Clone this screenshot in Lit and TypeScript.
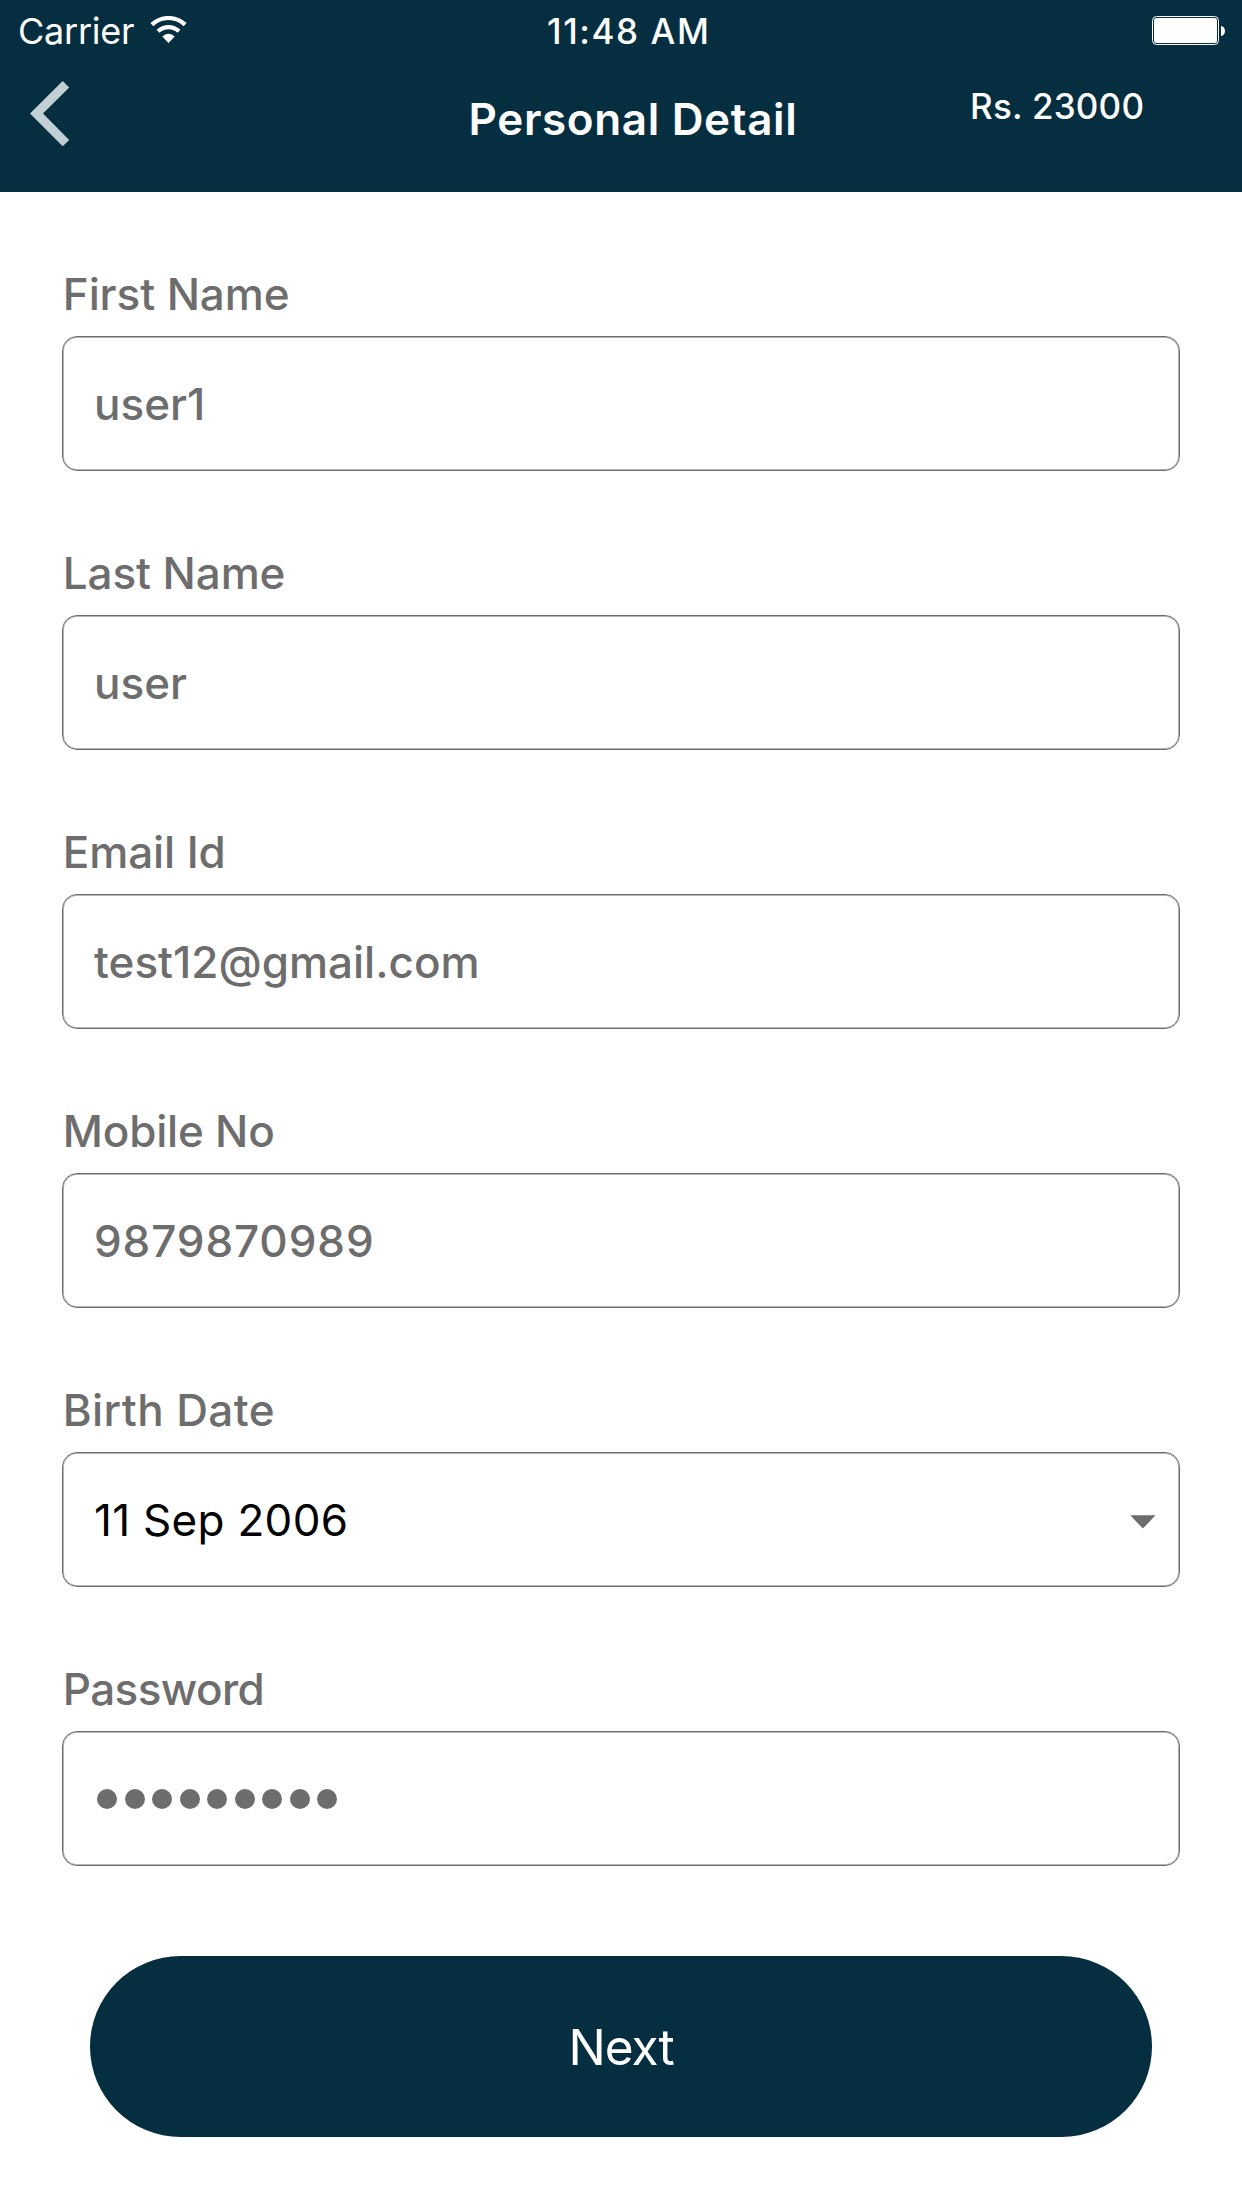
import { LitElement, html, css, svg, nothing } from "lit";
import { customElement, property } from "lit/decorators.js";

type FieldKind = "text" | "date" | "password";

interface Field {
  label: string;
  value: string;
  kind: FieldKind;
  name: string;
}

const FIELDS: Field[] = [
  { name: "first", label: "First Name", value: "user1", kind: "text" },
  { name: "last", label: "Last Name", value: "user", kind: "text" },
  { name: "email", label: "Email Id", value: "test12@gmail.com", kind: "text" },
  { name: "mobile", label: "Mobile No", value: "9879870989", kind: "text" },
  { name: "birth", label: "Birth Date", value: "11 Sep 2006", kind: "date" },
  { name: "password", label: "Password", value: "", kind: "password" },
];

const PASSWORD_LENGTH = 9;

@customElement("status-bar")
export class StatusBar extends LitElement {
  static styles = css`
    :host {
      display: grid;
      grid-template-columns: 547px 1fr auto;
      align-items: center;
      height: 62px;
      padding: 0 17px 0 0;
      box-sizing: border-box;
      color: #fff;
      font-size: 36px;
      line-height: 62px;
      white-space: nowrap;
    }
    .network {
      display: flex;
      align-items: center;
      gap: 15px;
      padding-left: 18px;
    }
    .carrier {
      width: 117px;
      letter-spacing: -0.25px;
    }
    .wifi {
      display: block;
      margin-top: -3px;
    }
    .time {
      font-size: 35px;
      font-weight: 500;
      letter-spacing: 1.6px;
    }
    .battery {
      display: block;
      margin-top: -1px;
    }
  `;

  render() {
    return html`
      <div class="network">
        <span class="carrier">Carrier</span>
        <svg class="wifi" width="37" height="27" viewBox="0 0 37 27">
          ${svg`
            <path d="M1.9 8.6A24.2 24.2 0 0 1 35.1 8.6" fill="none" stroke="#fff" stroke-width="4.2"/>
            <path d="M8 15.2A15.4 15.4 0 0 1 29 15.2" fill="none" stroke="#fff" stroke-width="4.2"/>
            <path d="M12.3 20.4A8.8 8.8 0 0 1 24.7 20.4L18.5 27Z" fill="#fff"/>
          `}
        </svg>
      </div>
      <span class="time">11:48 AM</span>
      <svg class="battery" width="73" height="29" viewBox="0 0 73 29">
        ${svg`
          <rect x="0.5" y="0.5" width="66" height="28" rx="4" fill="none" stroke="#fff"/>
          <rect x="2" y="2" width="63" height="25" rx="2.5" fill="#fff"/>
          <path d="M69 10C74.3 10.6 74.3 19.4 69 20Z" fill="#fff"/>
        `}
      </svg>
    `;
  }
}

@customElement("nav-header")
export class NavHeader extends LitElement {
  static styles = css`
    :host {
      display: grid;
      grid-template-columns: 468px 502px 1fr;
      align-items: start;
      height: 130px;
      color: #fff;
      white-space: nowrap;
    }
    .back {
      display: block;
      margin: 19px 0 0 30px;
    }
    .title {
      margin: 27px 0 0 0.5px;
      font-size: 44px;
      line-height: 60px;
      font-weight: 600;
      letter-spacing: 0.65px;
    }
    .amount {
      margin-top: 19px;
      font-size: 35px;
      line-height: 50px;
      font-weight: 500;
      letter-spacing: 0.2px;
    }
  `;

  render() {
    return html`
      <svg class="back" width="40" height="66" viewBox="0 0 40 66">
        ${svg`<path d="M32.7 0L39.2 6.5L13 32.5L39.2 59L32.7 65.3L0 32.5Z" fill="#c2cfd5"/>`}
      </svg>
      <h1 class="title">Personal Detail</h1>
      <span class="amount">Rs. 23000</span>
    `;
  }
}

@customElement("form-field")
export class FormField extends LitElement {
  @property() name = "";
  @property() label = "";
  @property() value = "";
  @property() kind: FieldKind = "text";

  static styles = css`
    :host {
      display: block;
      color: #6d6d6d;
      font-size: 44px;
      font-weight: 500;
      line-height: 52px;
      white-space: nowrap;
    }
    .field {
      display: flex;
      flex-direction: column;
      gap: 16px;
    }
    .label {
      padding-left: 0.8px;
      font-weight: 470;
      letter-spacing: -0.1px;
    }
    .box {
      display: flex;
      align-items: center;
      justify-content: space-between;
      box-sizing: border-box;
      height: 135px;
      padding: 0 23px 0 31px;
      border: 1px solid #6d6d6d;
      border-radius: 15px;
      box-shadow: inset 0 0 0 1px #b6b6b6;
    }
    .value.date {
      color: #000;
      font-weight: 400;
      letter-spacing: 0.3px;
    }
    .mobile .label {
      letter-spacing: -0.2px;
    }
    .mobile .value {
      letter-spacing: 0.9px;
    }
    .birth .label {
      letter-spacing: 0.4px;
    }
    .password .label {
      letter-spacing: -0.6px;
    }
    .dots {
      display: flex;
      gap: 7.5px;
      padding-left: 3.4px;
    }
    .dot {
      width: 20px;
      height: 20px;
      border-radius: 50%;
      background: #6d6d6d;
    }
    .caret {
      display: block;
      margin-top: 4px;
    }
  `;

  private renderValue() {
    if (this.kind === "password") {
      return html`<span class="dots">
        ${Array.from({ length: PASSWORD_LENGTH }, () => html`<span class="dot"></span>`)}
      </span>`;
    }
    return html`<span class="value ${this.kind}">${this.value}</span>`;
  }

  render() {
    return html`
      <div class="field ${this.name}">
        <span class="label">${this.label}</span>
        <div class="box">
          ${this.renderValue()}
          ${this.kind === "date"
            ? html`<svg class="caret" width="26" height="14" viewBox="0 0 26 14">
                <path d="M0.3 0.3H25.5L12.9 13.6Z" fill="#6d6d6d" />
              </svg>`
            : nothing}
        </div>
      </div>
    `;
  }
}

@customElement("app-root")
export class AppRoot extends LitElement {
  static styles = css`
    :host {
      display: block;
      height: 2208px;
      overflow: hidden;
      background: #fff;
      font-family: Inter, "Liberation Sans", sans-serif;
    }
    .header {
      height: 192px;
      background: #052e40;
    }
    .form {
      display: flex;
      flex-direction: column;
      gap: 76px;
      padding: 76px 62px 0;
    }
    .next {
      display: block;
      width: 1062px;
      height: 181px;
      margin: 90px auto 0;
      padding: 0;
      border: 0;
      border-radius: 90.5px;
      background: #052e40;
      color: #fff;
      font-family: inherit;
      font-size: 49.5px;
      font-weight: 380;
      letter-spacing: -1px;
    }
  `;

  render() {
    return html`
      <header class="header">
        <status-bar></status-bar>
        <nav-header></nav-header>
      </header>
      <main class="form">
        ${FIELDS.map(
          (f) => html`<form-field
            .name=${f.name}
            .label=${f.label}
            .value=${f.value}
            .kind=${f.kind}
          ></form-field>`
        )}
      </main>
      <button class="next" type="button">Next</button>
    `;
  }
}
